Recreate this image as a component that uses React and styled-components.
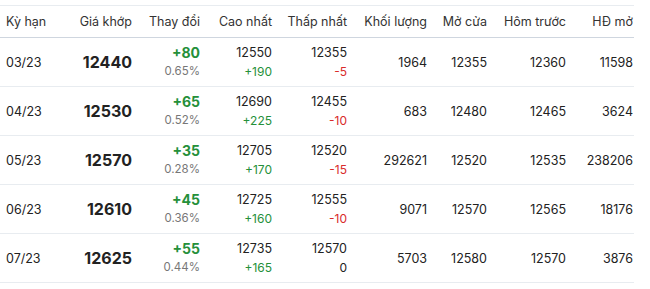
import React from "react";
import styled, { createGlobalStyle } from "styled-components";

const GlobalStyle = createGlobalStyle`
  body {
    margin: 0;
    background: #fff;
    font-family: Inter, "Liberation Sans", sans-serif;
    color: #222;
  }
`;

const Wrap = styled.div`
  padding-top: 5px;
`;

const Table = styled.table`
  width: 634px;
  border-collapse: collapse;
  table-layout: fixed;
  border-top: 1px solid #e8ecf0;
`;

const HeadCell = styled.th`
  height: 31px;
  padding: 0 6px 0 ${({ left }) => (left ? "6px" : "0")};
  padding-right: ${({ last }) => (last ? "1px" : "6px")};
  text-align: ${({ left }) => (left ? "left" : "right")};
  font-size: 12.5px;
  font-weight: 400;
  color: #333;
  border-bottom: 1px solid #cfd6df;
  white-space: nowrap;
`;

const Row = styled.tr`
  border-bottom: 1px solid #e8ecf0;
`;

const Cell = styled.td`
  height: 48px;
  padding: 0 6px 0 ${({ left }) => (left ? "6px" : "0")};
  padding-right: ${({ last }) => (last ? "1px" : "6px")};
  text-align: ${({ left }) => (left ? "left" : "right")};
  font-size: 12.5px;
  color: #222;
  white-space: nowrap;
`;

const Price = styled.span`
  font-size: 16px;
  font-weight: 700;
  color: #222;
`;

const Stack = styled.div`
  display: flex;
  flex-direction: column;
  align-items: flex-end;
  gap: 3px;
`;

const Change = styled.span`
  font-size: 14px;
  font-weight: 700;
  color: #25903a;
  line-height: 16px;
`;

const Pct = styled.span`
  font-size: 11.5px;
  color: #777;
  line-height: 15px;
`;

const Top = styled.span`
  font-size: 12.5px;
  color: #222;
  line-height: 16px;
`;

const Diff = styled.span`
  font-size: 12px;
  line-height: 15px;
  color: ${({ v }) => (v > 0 ? "#25903a" : v < 0 ? "#d92b2b" : "#222")};
`;

const cols = [72, 66, 68, 72, 75, 80, 60, 79, 62];
const heads = ["Kỳ hạn", "Giá khớp", "Thay đổi", "Cao nhất", "Thấp nhất", "Khối lượng", "Mở cửa", "Hôm trước", "HĐ mở"];

const data = [
  { term: "03/23", price: 12440, chg: 80, pct: "0.65%", high: 12550, hd: 190, low: 12355, ld: -5, vol: 1964, open: 12355, prev: 12360, oi: 11598 },
  { term: "04/23", price: 12530, chg: 65, pct: "0.52%", high: 12690, hd: 225, low: 12455, ld: -10, vol: 683, open: 12480, prev: 12465, oi: 3624 },
  { term: "05/23", price: 12570, chg: 35, pct: "0.28%", high: 12705, hd: 170, low: 12520, ld: -15, vol: 292621, open: 12520, prev: 12535, oi: 238206 },
  { term: "06/23", price: 12610, chg: 45, pct: "0.36%", high: 12725, hd: 160, low: 12555, ld: -10, vol: 9071, open: 12570, prev: 12565, oi: 18176 },
  { term: "07/23", price: 12625, chg: 55, pct: "0.44%", high: 12735, hd: 165, low: 12570, ld: 0, vol: 5703, open: 12580, prev: 12570, oi: 3876 },
];

const sign = (v) => (v > 0 ? `+${v}` : `${v}`);

const App = () => {
  return (
    <Wrap>
      <GlobalStyle />
      <Table>
        <colgroup>
          {cols.map((w, i) => (
            <col key={i} style={{ width: w }} />
          ))}
        </colgroup>
        <thead>
          <tr>
            {heads.map((h, i) => (
              <HeadCell key={h} left={i === 0} last={i === heads.length - 1}>
                {h}
              </HeadCell>
            ))}
          </tr>
        </thead>
        <tbody>
          {data.map((r) => (
            <Row key={r.term}>
              <Cell left>{r.term}</Cell>
              <Cell><Price>{r.price}</Price></Cell>
              <Cell>
                <Stack>
                  <Change>{sign(r.chg)}</Change>
                  <Pct>{r.pct}</Pct>
                </Stack>
              </Cell>
              <Cell>
                <Stack>
                  <Top>{r.high}</Top>
                  <Diff v={r.hd}>{sign(r.hd)}</Diff>
                </Stack>
              </Cell>
              <Cell>
                <Stack>
                  <Top>{r.low}</Top>
                  <Diff v={r.ld}>{sign(r.ld)}</Diff>
                </Stack>
              </Cell>
              <Cell>{r.vol}</Cell>
              <Cell>{r.open}</Cell>
              <Cell>{r.prev}</Cell>
              <Cell last>{r.oi}</Cell>
            </Row>
          ))}
        </tbody>
      </Table>
    </Wrap>
  );
};

export default App;
